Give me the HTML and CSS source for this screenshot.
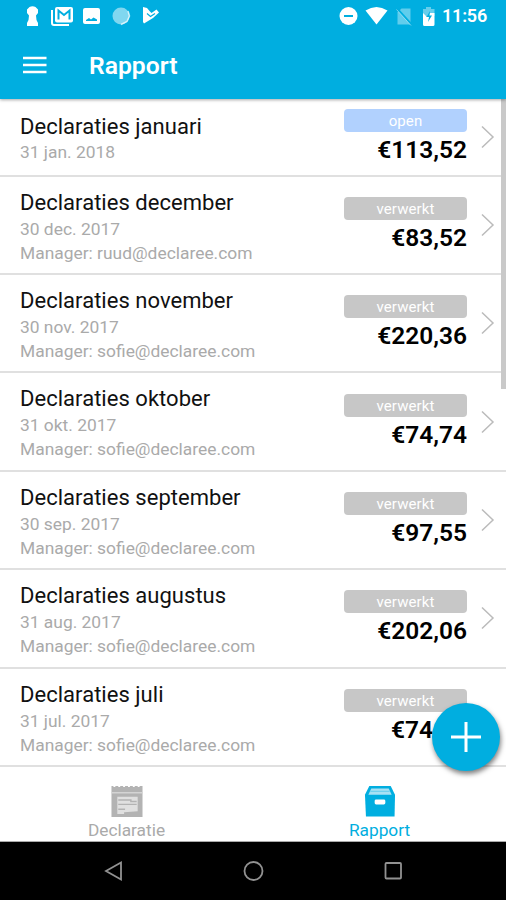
FILE: index.html
```html
<!DOCTYPE html>
<html lang="nl">
<head>
<meta charset="utf-8">
<title>Rapport</title>
<link rel="stylesheet" href="styles.css">
</head>
<body>
<div class="app">
  <header class="header">
    <div class="status">
      <svg class="status-left" width="140" height="30" viewBox="0 0 140 30" fill="#fff">
        <path d="M29.500 6 Q32.500 4.500 35.500 6 L38 8.500 V12 L36 14.500 L36.500 19 L38 22 V25 H27 V22 L28.500 19 L29 14.500 L27 12 V8.500Z"/>
        <path d="M52 9 V22 Q52 24 54 24 H69" fill="none" stroke="#fff" stroke-width="2"/>
        <rect x="55" y="6" width="18" height="15.500" rx="2"/>
        <path d="M58.500 18.500 V9.500 L64 14 L69.500 9.500 V18.500" fill="none" stroke="#00aee0" stroke-width="2"/>
        <path fill-rule="evenodd" d="M85 7 H98 Q100 7 100 9 V21 Q100 23 98 23 H85 Q83 23 83 21 V9 Q83 7 85 7Z M86 20 H97 V18.500 L93.500 16.500 L91 18.500 L89 17 L86 19Z"/>
        <circle cx="121" cy="15" r="8.500" opacity=".5"/>
        <path d="M128 10 L129.500 15 L127 20.500 L121 23.500" fill="none" stroke="#fff" stroke-width="1.500" opacity=".7"/>
      </svg>
      <svg class="play" width="18" height="18" viewBox="0 0 18 18"><path fill="#fff" d="M1 1 L5 2 L7.500 5 L9.500 7 L14.500 3.500 L17 6.500 L11 12 L2 17.500 L1 16Z"/><path d="M5 7.500 L8.500 10.500 L13 7.500" fill="none" stroke="#00aee0" stroke-width="1.200"/></svg>
      <svg class="status-right" width="100" height="30" viewBox="0 0 100 30" fill="#fff">
        <circle cx="9.500" cy="15" r="9"/><path d="M5 15 H14" stroke="#00aee0" stroke-width="2"/>
        <path d="M26.500 9.500 Q37.500 2.500 48.500 9.500 L37.500 23.500Z"/>
        <path d="M62.500 7.500 H71.500 V23.500 H58.500 V11.500Z" opacity=".38"/>
        <path d="M58.500 8 L73 24" stroke="#00aee0" stroke-width="2"/><path d="M57.500 8.500 L72 24.500" stroke="#fff" opacity=".45"/>
        <path d="M87 6 H92 V8 H95.500 V15 H84 V8 H87Z" opacity=".4"/>
        <path d="M84 12 L88 16 L91 12 H95.500 V23.500 Q95.500 25 94 25 H85.500 Q84 25 84 23.500Z"/>
        <path d="M91 10 L87.500 16 H90 L89 21 L93 14.500 H90.500Z" fill="#00aee0"/>
      </svg>
      <span class="clock">11:56</span>
    </div>
    <div class="toolbar">
      <svg width="24" height="18" viewBox="0 0 24 18" stroke="#fff" stroke-width="2.700"><path d="M0 2 H23.500 M0 9 H23.500 M0 16 H23.500"/></svg>
      <h1 class="heading">Rapport</h1>
    </div>
  </header>
  <main class="list">
    <article class="row row-short">
      <div class="info"><h2 class="title">Declaraties januari</h2><p class="meta">31 jan. 2018</p></div>
      <div class="side"><span class="badge badge-open">open</span><strong class="amount">€113,52</strong></div>
      <svg class="chevron" viewBox="0 0 12 22"><path d="M.5.5 L11.500 11 L.5 21.500"/></svg>
    </article>
    <article class="row">
      <div class="info"><h2 class="title">Declaraties december</h2><p class="meta">30 dec. 2017</p><p class="meta">Manager: ruud@declaree.com</p></div>
      <div class="side"><span class="badge">verwerkt</span><strong class="amount">€83,52</strong></div>
      <svg class="chevron" viewBox="0 0 12 22"><path d="M.5.5 L11.500 11 L.5 21.500"/></svg>
    </article>
    <article class="row">
      <div class="info"><h2 class="title">Declaraties november</h2><p class="meta">30 nov. 2017</p><p class="meta">Manager: sofie@declaree.com</p></div>
      <div class="side"><span class="badge">verwerkt</span><strong class="amount">€220,36</strong></div>
      <svg class="chevron" viewBox="0 0 12 22"><path d="M.5.5 L11.500 11 L.5 21.500"/></svg>
    </article>
    <article class="row">
      <div class="info"><h2 class="title">Declaraties oktober</h2><p class="meta">31 okt. 2017</p><p class="meta">Manager: sofie@declaree.com</p></div>
      <div class="side"><span class="badge">verwerkt</span><strong class="amount">€74,74</strong></div>
      <svg class="chevron" viewBox="0 0 12 22"><path d="M.5.5 L11.500 11 L.5 21.500"/></svg>
    </article>
    <article class="row">
      <div class="info"><h2 class="title">Declaraties september</h2><p class="meta">30 sep. 2017</p><p class="meta">Manager: sofie@declaree.com</p></div>
      <div class="side"><span class="badge">verwerkt</span><strong class="amount">€97,55</strong></div>
      <svg class="chevron" viewBox="0 0 12 22"><path d="M.5.5 L11.500 11 L.5 21.500"/></svg>
    </article>
    <article class="row">
      <div class="info"><h2 class="title">Declaraties augustus</h2><p class="meta">31 aug. 2017</p><p class="meta">Manager: sofie@declaree.com</p></div>
      <div class="side"><span class="badge">verwerkt</span><strong class="amount">€202,06</strong></div>
      <svg class="chevron" viewBox="0 0 12 22"><path d="M.5.5 L11.500 11 L.5 21.500"/></svg>
    </article>
    <article class="row row-last">
      <div class="info"><h2 class="title">Declaraties juli</h2><p class="meta">31 jul. 2017</p><p class="meta">Manager: sofie@declaree.com</p></div>
      <div class="side"><span class="badge">verwerkt</span><strong class="amount amount-cut">€74</strong></div>
    </article>
    <div class="scrollbar"></div>
    <button class="fab" aria-label="+"><svg width="30" height="30" viewBox="0 0 30 30"><path d="M15 0 V30 M0 15 H30" stroke="#fff" stroke-width="3"/></svg></button>
  </main>
  <nav class="tabs">
    <a class="tab">
      <svg width="32" height="33" viewBox="0 0 32 33"><path fill="#b3b3b3" d="M0 1 H2 V2 H4 V1 H7 V2 H9 V1 H12 V2 H14 V1 H17 V2 H19 V1 H22 V2 H24 V1 H27 V2 H29 V1 H32 V33 H0Z"/><path d="M0 8 H32" stroke="#d5d5d5" stroke-width="1.500"/><path fill="#e0e0e0" d="M6 12 H27 V27 L13 28 V30 H6Z"/><path d="M7 15.500 H20 V17 H26 M7 20 H26 M7 25 H14" fill="none" stroke="#b3b3b3" stroke-width="1.500"/></svg>
      <span>Declaratie</span>
    </a>
    <a class="tab tab-active">
      <svg width="32" height="33" viewBox="0 0 32 33"><path fill="#00aee0" d="M5 1 H27 L31.500 10 L31 32.500 H1.500 L.5 10Z"/><path fill="#a9e1f4" d="M7 3.500 H25 L28 10 H4Z"/><path d="M6 6.500 H26" stroke="#65cbea"/><rect x="10.500" y="15" width="11" height="5" rx="1.500" fill="#fff"/></svg>
      <span>Rapport</span>
    </a>
  </nav>
  <footer class="navbar">
    <svg width="506" height="58" viewBox="0 0 506 58" fill="none" stroke="#929292" stroke-width="1.800"><path d="M106 29 L121 20.500 V37.500Z"/><circle cx="253.500" cy="29" r="9"/><rect x="385.500" y="21" width="15.500" height="15.500" rx="1"/></svg>
  </footer>
</div>
</body>
</html>
```
FILE: styles.css
```css
* { box-sizing: border-box; }
body { margin: 0; font-family: Roboto, "Liberation Sans", sans-serif; background: #fff; }
.app { width: 506px; height: 900px; display: flex; flex-direction: column; overflow: hidden; }
.header { height: 99px; flex: none; background: #00aee0; color: #fff; box-shadow: 0 1px 3px rgba(0,0,0,.35); z-index: 1; }
.status { display: flex; align-items: center; height: 31px; }
.status-left { flex: none; }
.play { margin-left: 2px; margin-bottom: 2px; }
.status-right { margin-left: 179px; flex: none; }
.clock { margin-left: 3px; font-size: 18px; font-weight: 600; letter-spacing: -.2px; line-height: 32px; }
.toolbar { display: flex; align-items: center; height: 68px; padding-left: 23px; }
.heading { margin: 1px 0 0 42px; font-size: 24.700px; font-weight: 600; line-height: 30px; }
.toolbar svg { margin-bottom: 1px; }
.list { position: relative; flex: none; height: 667px; }
.row { display: flex; height: 98.400px; border-bottom: 2px solid #e0e0e0; padding: 0 12px 0 20px; align-items: center; }
.row-short { height: 77.600px; }
.info { align-self: flex-start; padding-top: 12px; flex: 1; }
.row-short .info { padding-top: 13.500px; }
.title { margin: 0; font-size: 22px; font-weight: 400; line-height: 28px; letter-spacing: .03px; color: #111; }
.meta { margin: 0; font-size: 17.400px; line-height: 24px; color: #aaa; }
.row-short .meta { margin-top: -.5px; }
.side { width: 123px; margin-right: 14px; display: flex; flex-direction: column; padding-top: 1px; }
.badge { height: 23px; border-radius: 4px; background: #c7c7c7; color: #fff; font-size: 15px; line-height: 25px; text-align: center; letter-spacing: .1px; }
.badge-open { background: #b1d1fe; }
.amount { padding-top: 1px; text-align: right; font-size: 24.500px; line-height: 33px; font-weight: 600; color: #000; }
.amount-cut { padding-right: 34px; }
.row-last { padding-right: 39px; }
.row-last .side { margin-right: 0; }
.chevron { width: 13px; height: 22px; fill: none; stroke: #bbb; stroke-width: 1.500; overflow: visible; }
.scrollbar { position: absolute; right: 0; top: 0; width: 5px; height: 290px; background: #c9c9c9; }
.fab { position: absolute; left: 432px; top: 604px; width: 68px; height: 68px; padding: 0; border: 0; border-radius: 50%; background: #00aee0; box-shadow: 1px 3px 5px rgba(0,0,0,.5); display: grid; place-items: center; }
.tabs { flex: none; height: 76px; display: flex; border-bottom: 1px solid #aaa; }
.tab { flex: 1; display: flex; flex-direction: column; align-items: center; padding-top: 19px; font-size: 17.300px; line-height: 22px; color: #aaa; }
.tab span { margin-top: 2px; }
.tab-active { color: #00aee0; }
.navbar { flex: none; height: 58px; background: #000; }
```
